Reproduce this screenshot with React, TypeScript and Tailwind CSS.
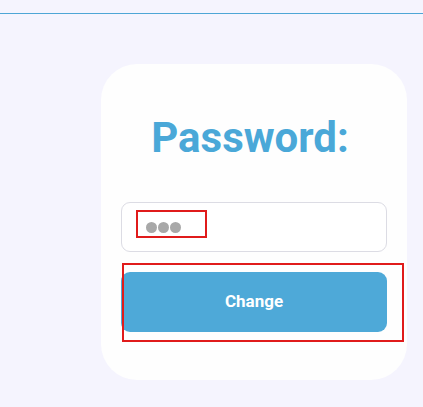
import React from 'react';

export default function App() {
    return (
        <div className="min-h-[407px] w-full bg-[#f5f4fe] font-['Roboto',sans-serif]">
            {/* top rule */}
            <div className="pt-[13px]">
                <div className="h-px bg-[#4ea6d6]" />
            </div>

            <div className="flex justify-end pr-[16px] pt-[50px]">
                <div className="relative w-[306px] h-[316px] rounded-[36px] bg-[#fefefe] px-[20px] pt-[48px]">
                    <h1 className="text-center text-[42px] leading-[52px] font-bold text-[#4aa8d8] pr-[8px]">Password:</h1>

                    <div className="mt-[38px] h-[50px] rounded-[9px] border border-[#dcdce4] bg-white flex items-center pl-[24px] gap-[1px]">
                        <span className="w-[11px] h-[11px] rounded-full bg-[#a8a8a8]" />
                        <span className="w-[11px] h-[11px] rounded-full bg-[#a8a8a8]" />
                        <span className="w-[11px] h-[11px] rounded-full bg-[#a8a8a8]" />
                    </div>

                    <button className="mt-[20px] w-full h-[60px] rounded-[9px] bg-[#4ea9d8] text-white text-[17px] font-bold">
                        Change
                    </button>

                    {/* annotation boxes */}
                    <div className="absolute left-[35px] top-[146px] w-[71px] h-[28px] border-2 border-[#e01b1b]" />
                    <div className="absolute left-[21px] top-[199px] w-[282px] h-[79px] border-2 border-[#e01b1b]" />
                </div>
            </div>
        </div>
    );
}
